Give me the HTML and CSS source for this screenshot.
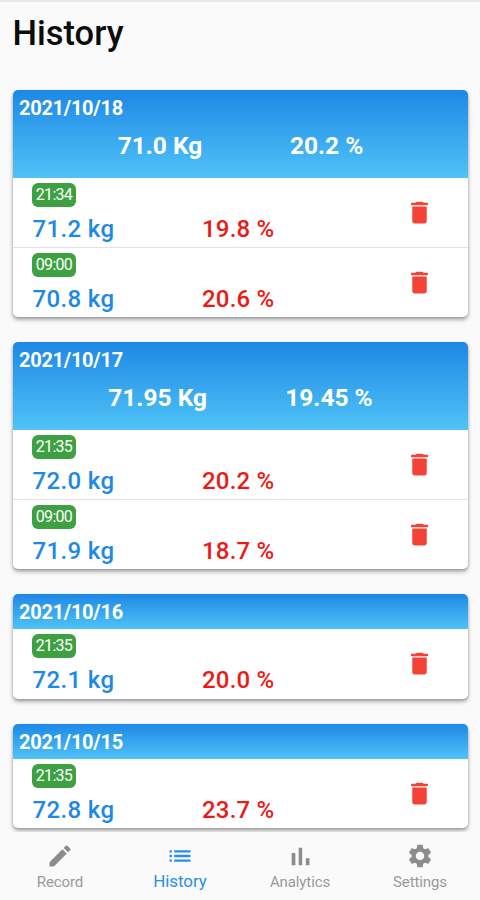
FILE: index.html
```html
<!DOCTYPE html>
<html lang="en">
<head>
<meta charset="utf-8">
<title>History</title>
<link rel="stylesheet" href="styles.css">
</head>
<body>
<svg class="defs" width="0" height="0" aria-hidden="true">
  <symbol id="trash" viewBox="0 0 24 24"><path d="M6 19c0 1.100.9 2 2 2h8c1.100 0 2-.9 2-2V7H6v12z"/><path d="M19 4h-3.500l-1-1h-5l-1 1H5v2h14V4z"/></symbol>
</svg>
<div class="screen">
  <main class="content">
    <h1 class="title">History</h1>
    <section class="card">
      <header class="head head-tall"><div class="date">2021/10/18</div><div class="summary"><span>71.0 Kg</span><span>20.2 %</span></div></header>
      <div class="row"><div class="weight"><span class="time">21:34</span><b>71.2 kg</b></div><b class="fat">19.8 %</b><svg class="trash"><use href="#trash"/></svg></div>
      <div class="row"><div class="weight"><span class="time">09:00</span><b>70.8 kg</b></div><b class="fat">20.6 %</b><svg class="trash"><use href="#trash"/></svg></div>
    </section>
    <section class="card">
      <header class="head head-tall"><div class="date">2021/10/17</div><div class="summary"><span>71.95 Kg</span><span>19.45 %</span></div></header>
      <div class="row"><div class="weight"><span class="time">21:35</span><b>72.0 kg</b></div><b class="fat">20.2 %</b><svg class="trash"><use href="#trash"/></svg></div>
      <div class="row"><div class="weight"><span class="time">09:00</span><b>71.9 kg</b></div><b class="fat">18.7 %</b><svg class="trash"><use href="#trash"/></svg></div>
    </section>
    <section class="card">
      <header class="head"><div class="date">2021/10/16</div></header>
      <div class="row"><div class="weight"><span class="time">21:35</span><b>72.1 kg</b></div><b class="fat">20.0 %</b><svg class="trash"><use href="#trash"/></svg></div>
    </section>
    <section class="card">
      <header class="head"><div class="date">2021/10/15</div></header>
      <div class="row"><div class="weight"><span class="time">21:35</span><b>72.8 kg</b></div><b class="fat">23.7 %</b><svg class="trash"><use href="#trash"/></svg></div>
    </section>
  </main>
  <nav class="nav">
    <a class="tab"><svg viewBox="0 0 24 24"><path d="M3 17.250V21h3.750L17.810 9.940l-3.750-3.750L3 17.250zM20.710 7.040a1 1 0 0 0 0-1.410l-2.340-2.340a1 1 0 0 0-1.410 0l-1.830 1.830 3.750 3.750 1.830-1.830z"/></svg><span>Record</span></a>
    <a class="tab active"><svg viewBox="0 0 24 24"><path d="M3 13h2v-2H3v2zm0 4h2v-2H3v2zm0-8h2V7H3v2zm4 4h14v-2H7v2zm0 4h14v-2H7v2zM7 7v2h14V7H7z"/></svg><span>History</span></a>
    <a class="tab"><svg viewBox="0 0 24 24"><path d="M4.900 9.400H8V20H4.900zM10.900 5h3v15h-3zM17 14h3.100v6H17z"/></svg><span>Analytics</span></a>
    <a class="tab"><svg viewBox="0 0 24 24"><path d="M19.140 12.940c.04-.3.06-.61.06-.94 0-.32-.02-.64-.07-.94l2.030-1.580c.18-.14.23-.41.12-.61l-1.920-3.320c-.12-.22-.37-.29-.59-.22l-2.390.96c-.5-.38-1.030-.7-1.620-.94l-.36-2.540c-.04-.24-.24-.41-.48-.41h-3.840c-.24 0-.43.17-.47.41l-.36 2.540c-.59.24-1.130.57-1.620.94l-2.390-.96c-.22-.08-.47 0-.59.22L2.740 8.870c-.12.21-.08.47.12.61l2.030 1.580c-.05.3-.09.63-.09.94s.02.64.07.94l-2.030 1.580c-.18.14-.23.41-.12.61l1.920 3.320c.12.22.37.29.59.22l2.390-.96c.5.38 1.030.7 1.620.94l.36 2.540c.05.24.24.41.48.41h3.840c.24 0 .44-.17.47-.41l.36-2.540c.59-.24 1.130-.56 1.620-.94l2.390.96c.22.08.47 0 .59-.22l1.920-3.320c.12-.22.07-.47-.12-.61l-2.010-1.580zM12 15.600c-1.980 0-3.600-1.620-3.600-3.600s1.620-3.600 3.600-3.600 3.600 1.620 3.600 3.600-1.620 3.600-3.600 3.600z"/></svg><span>Settings</span></a>
  </nav>
</div>
</body>
</html>
```

FILE: styles.css
```css
* { box-sizing: border-box; }
body { margin: 0; font-family: Roboto, "Liberation Sans", sans-serif; background: #fafafa; }
.defs { display: block; }
.screen { height: 900px; display: flex; flex-direction: column; overflow: hidden; border-top: 2px solid #e6e6e6; }
.content { flex: 1; min-height: 0; overflow: hidden; padding: 0 12px 0 13px; }
.title { margin: 0 0 36.100px; padding-top: 10px; height: 52px; font-size: 34.500px; line-height: 42px; font-weight: 500; color: #0c0c0c; text-indent: -.5px; }
.card { margin-bottom: 25.600px; border-radius: 5px; background: #fff; box-shadow: 0 3px 4px rgba(0,0,0,.28), 0 1px 3px rgba(0,0,0,.2); }
.head { height: 35px; padding: 6px 6px 0; border-radius: 5px 5px 0 0; background: linear-gradient(#1e88e5, #4fc3f7); color: #fff; font-weight: 700; }
.head-tall { height: 87.900px; }
.date { font-size: 20px; line-height: 24px; letter-spacing: -.28px; }
.summary { display: flex; justify-content: space-evenly; padding: 0 11px; font-size: 24.500px; line-height: 28px; margin-top: 12px; }
.row { height: 69.300px; display: grid; grid-template-columns: 170px 1fr 63px; padding: 5px 0 0 19px; }
.row + .row { border-top: 1px solid #e2e2e2; padding-top: 4.500px; }
.weight { display: flex; flex-direction: column; align-items: flex-start; color: #1e88e5; }
.time { width: 44px; height: 24px; border-radius: 6px; background: #3da142; color: #fff; font-size: 16px; line-height: 24px; letter-spacing: -.7px; text-align: center; }
.row b { font-size: 24px; line-height: 28px; font-weight: 500; letter-spacing: .2px; }
.row .weight b { margin-top: 8px; padding-left: .5px; letter-spacing: .35px; }
.fat { margin-top: 32px; color: #ec1a16; }
.trash { width: 29px; height: 29px; margin-top: 15px; fill: #f44336; }
.nav { height: 68px; display: grid; grid-template-columns: repeat(4, 1fr); background: #fafafa; position: relative; }
.tab { display: flex; flex-direction: column; align-items: center; padding-top: 10px; color: #999; font-size: 15px; line-height: 20px; letter-spacing: -.1px; }
.tab svg { width: 28px; height: 28px; fill: #8c8c8c; }
.tab span { margin-top: 2px; }
.active { color: #2a8fe8; font-size: 17px; }
.active svg { fill: #2a8fe8; }
.active span { margin-top: 1px; }
```
